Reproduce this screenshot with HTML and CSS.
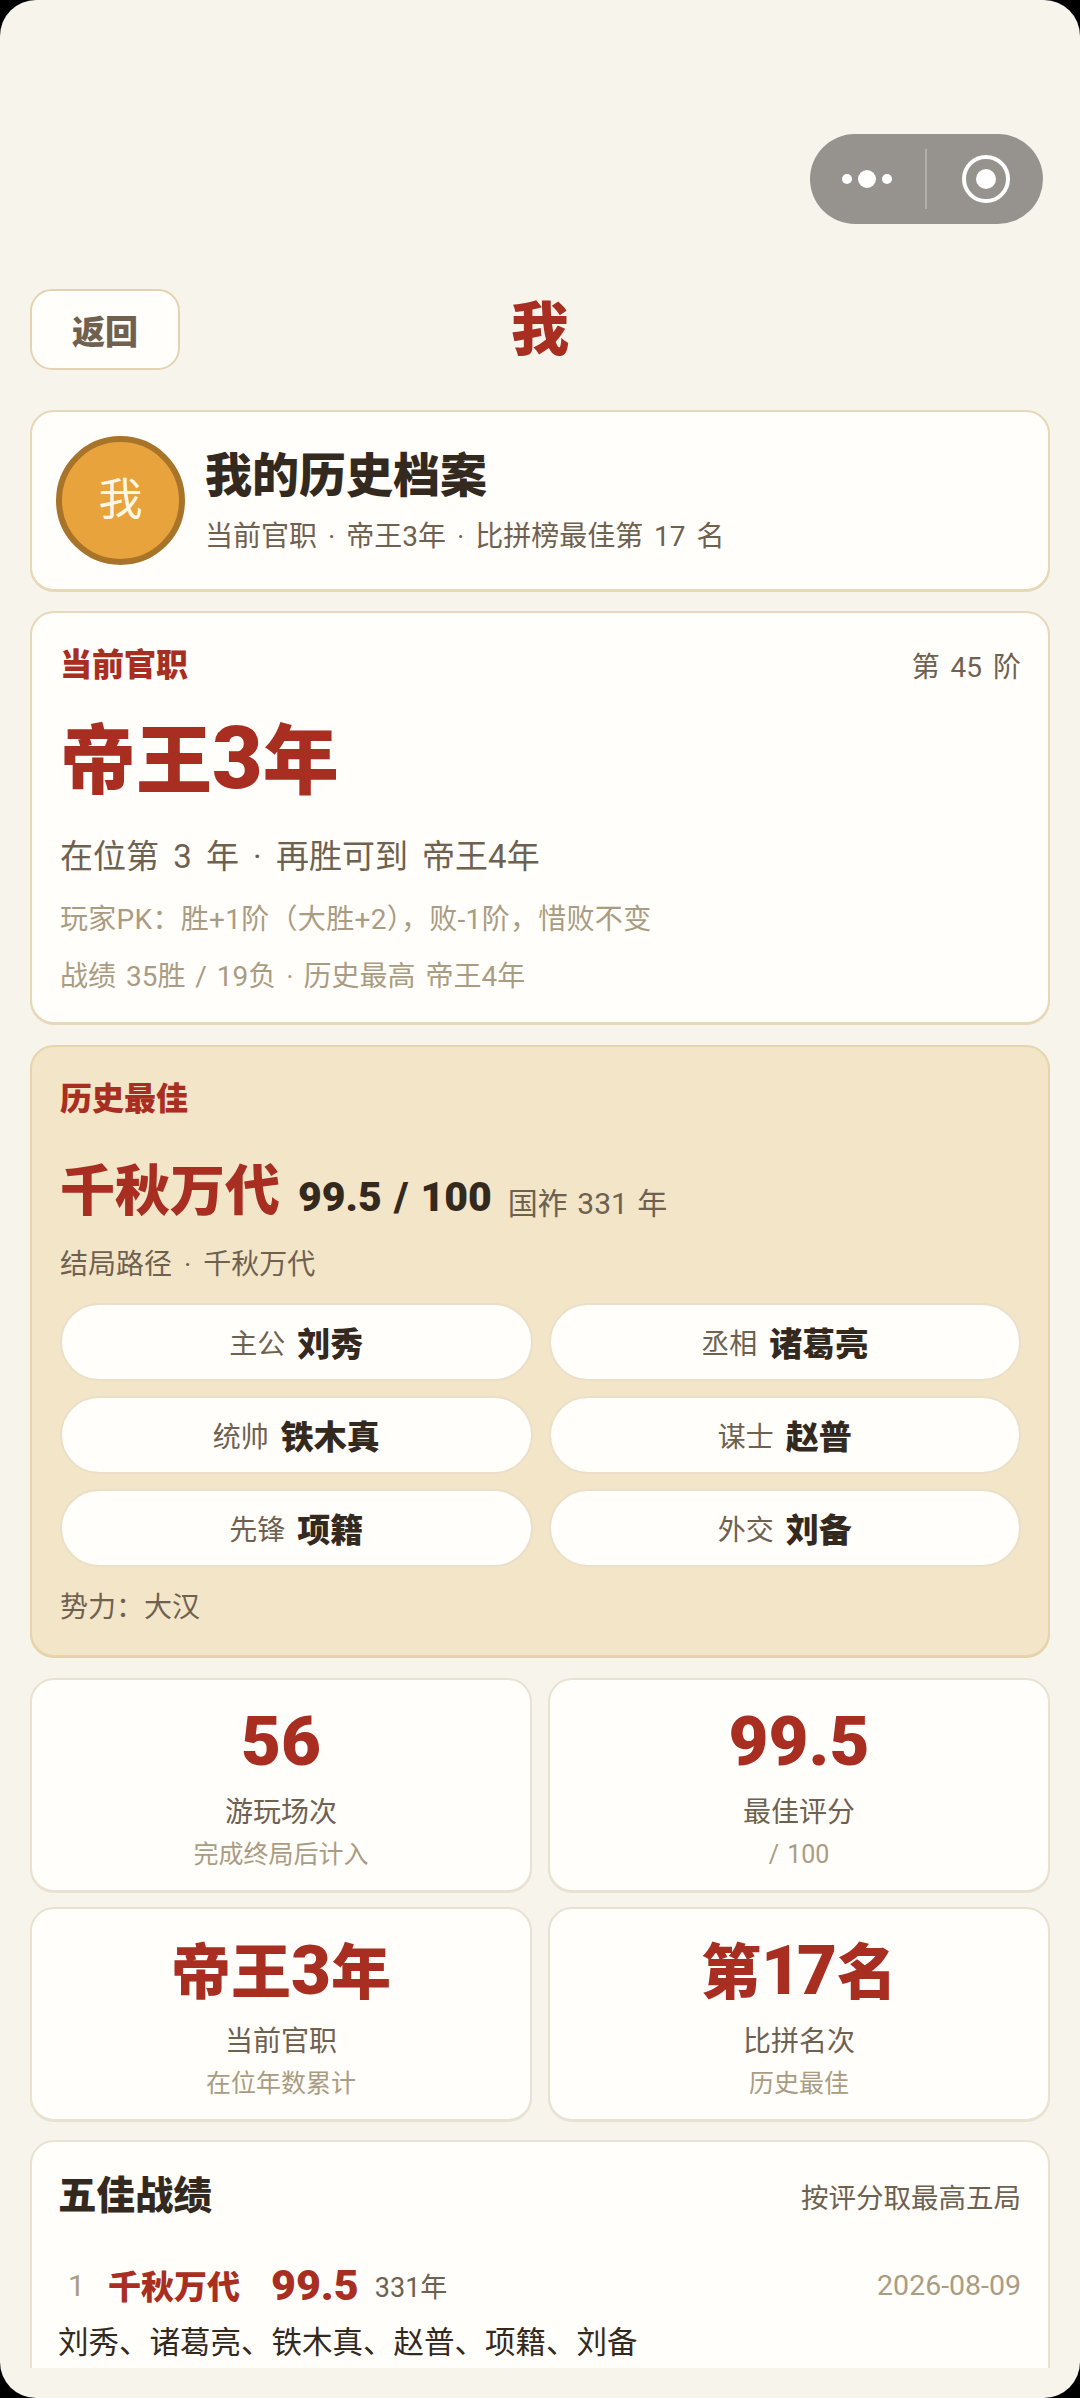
FILE: index.html
```html
<!DOCTYPE html>
<html lang="zh-CN">

<head>
    <meta charset="UTF-8">
    <meta name="viewport" content="width=device-width, initial-scale=1.0">
    <title>我</title>
    <link rel="stylesheet" href="styles.css">
</head>

<body>
    <div class="screen">
        <div class="capsule">
            <svg class="capsule-more" width="50" height="18" viewBox="0 0 50 18">
                <circle cx="5" cy="9" r="5" fill="#fff" />
                <circle cx="25" cy="9" r="9" fill="#fff" />
                <circle cx="45" cy="9" r="5" fill="#fff" />
            </svg>
            <span class="capsule-line"></span>
            <svg class="capsule-close" width="50" height="50" viewBox="0 0 50 50">
                <circle cx="25" cy="25" r="22" fill="none" stroke="#fff" stroke-width="4" />
                <circle cx="25" cy="25" r="10" fill="#fff" />
            </svg>
        </div>

        <div class="content">
            <div class="nav">
                <button class="btn-back">返回</button>
                <div class="nav-title">我</div>
            </div>

            <div class="card profile">
                <div class="avatar">我</div>
                <div>
                    <div class="profile-name">我的历史档案</div>
                    <div class="profile-sub">当前官职 · 帝王3年 · 比拼榜最佳第 17 名</div>
                </div>
            </div>

            <div class="card rank">
                <div class="row-between">
                    <span class="label">当前官职</span>
                    <span class="rank-level">第 45 阶</span>
                </div>
                <div class="rank-title">帝王<span class="digit">3</span>年</div>
                <div class="rank-line">在位第 3 年 · 再胜可到 帝王4年</div>
                <div class="hint rank-hint">玩家PK：胜+1阶（大胜+2），败-1阶，惜败不变</div>
                <div class="hint rank-hint2">战绩 35胜 / 19负 · 历史最高 帝王4年</div>
            </div>

            <div class="card best">
                <div class="label">历史最佳</div>
                <div class="best-head">
                    <span class="best-name">千秋万代</span>
                    <span class="best-score">99.5 / 100</span>
                    <span class="best-years">国祚 331 年</span>
                </div>
                <div class="best-path">结局路径 · 千秋万代</div>
                <div class="team">
                    <div class="pill"><span>主公</span><b>刘秀</b></div>
                    <div class="pill"><span>丞相</span><b>诸葛亮</b></div>
                    <div class="pill"><span>统帅</span><b>铁木真</b></div>
                    <div class="pill"><span>谋士</span><b>赵普</b></div>
                    <div class="pill"><span>先锋</span><b>项籍</b></div>
                    <div class="pill"><span>外交</span><b>刘备</b></div>
                </div>
                <div class="best-path best-force">势力：大汉</div>
            </div>

            <div class="stats">
                <div class="card stat">
                    <div class="stat-num"><span class="digit">56</span></div>
                    <div class="stat-label">游玩场次</div>
                    <div class="stat-sub">完成终局后计入</div>
                </div>
                <div class="card stat">
                    <div class="stat-num"><span class="digit">99.5</span></div>
                    <div class="stat-label">最佳评分</div>
                    <div class="stat-sub">/ 100</div>
                </div>
                <div class="card stat">
                    <div class="stat-num">帝王<span class="digit">3</span>年</div>
                    <div class="stat-label">当前官职</div>
                    <div class="stat-sub">在位年数累计</div>
                </div>
                <div class="card stat">
                    <div class="stat-num">第<span class="digit digit-tight">17</span>名</div>
                    <div class="stat-label">比拼名次</div>
                    <div class="stat-sub">历史最佳</div>
                </div>
            </div>

            <div class="card top5">
                <div class="row-between">
                    <span class="top5-title">五佳战绩</span>
                    <span class="top5-note">按评分取最高五局</span>
                </div>
                <div class="record">
                    <span class="record-no">1</span>
                    <span class="record-name">千秋万代</span>
                    <span class="record-score">99.5</span>
                    <span class="record-years">331年</span>
                    <span class="record-date">2026-08-09</span>
                </div>
                <div class="record-team">刘秀、诸葛亮、铁木真、赵普、项籍、刘备</div>
            </div>
        </div>
    </div>
</body>

</html>
```

FILE: styles.css
```css
:root {
    --bg: #f7f4ec;
    --card: #fffefa;
    --line: #e6d8b8;
    --line-soft: #e9e2d2;
    --red: #a82e22;
    --ink: #33291e;
    --sub: #6e6150;
    --hint: #aa9c82;
}

* {
    margin: 0;
    padding: 0;
    box-sizing: border-box;
}

html,
body {
    width: 1080px;
    height: 2398px;
    overflow: hidden;
    background: #000;
}

body {
    font-family: "Roboto", "Noto Sans CJK SC", sans-serif;
    color: var(--ink);
    word-spacing: 2px;
}

.screen {
    position: relative;
    width: 1080px;
    height: 2398px;
    padding-top: 289px;
    background: var(--bg);
    border-radius: 36px;
    overflow: hidden;
}

.capsule {
    position: absolute;
    top: 134px;
    left: 810px;
    width: 233px;
    height: 90px;
    display: flex;
    align-items: center;
    background: #96938e;
    border-radius: 45px;
}

.capsule-more {
    margin-left: 32px;
}

.capsule-line {
    width: 2px;
    height: 60px;
    margin-left: 33px;
    background: #b3b0aa;
}

.capsule-close {
    margin-left: 34px;
}

.content {
    height: 2079px;
    padding: 0 30px;
    overflow: hidden;
}

.nav {
    position: relative;
    height: 81px;
    margin-bottom: 40px;
}

.btn-back {
    display: block;
    width: 150px;
    height: 81px;
    font-family: inherit;
    font-size: 33px;
    font-weight: 900;
    color: var(--sub);
    background: var(--card);
    border: 2px solid #e4d3b2;
    border-radius: 22px;
}

.nav-title {
    position: absolute;
    top: 1px;
    left: 0;
    width: 1020px;
    line-height: 81px;
    text-align: center;
    font-size: 58px;
    font-weight: 900;
    color: var(--red);
}

.card {
    background: var(--card);
    border: 2px solid var(--line);
    border-radius: 24px;
    box-shadow: 0 1px 0 var(--line);
}

.row-between {
    display: flex;
    justify-content: space-between;
    align-items: center;
}

.profile {
    height: 181px;
    margin-bottom: 20px;
    padding-left: 24px;
    display: flex;
    align-items: center;
    gap: 20px;
}

.avatar {
    width: 129px;
    height: 129px;
    line-height: 117px;
    text-align: center;
    font-size: 44px;
    color: #fff8e6;
    background: #e8a33d;
    border: 6px solid #a8742a;
    border-radius: 50%;
}

.profile-name {
    font-size: 47px;
    font-weight: 900;
    line-height: 60px;
}

.profile-sub {
    margin-top: 13px;
    font-size: 28px;
    line-height: 36px;
    color: var(--sub);
    word-spacing: 4px;
}

.rank {
    height: 413px;
    margin-bottom: 21px;
    padding: 32px 27px 0 28px;
}

.label {
    font-size: 32px;
    font-weight: 900;
    line-height: 40px;
    color: var(--red);
}

.rank-level {
    font-size: 28px;
    color: var(--sub);
    word-spacing: 4px;
}

.digit {
    font-size: 1.15em;
    line-height: 1;
}

.digit-tight {
    letter-spacing: -4px;
    margin-right: 4px;
}

.rank-title {
    margin-top: 28px;
    font-size: 76px;
    font-weight: 900;
    line-height: 98px;
    color: var(--red);
}

.rank-line {
    margin-top: 24px;
    font-size: 33px;
    line-height: 44px;
    color: var(--sub);
    word-spacing: 6px;
}

.hint {
    font-size: 28px;
    line-height: 38px;
    color: var(--hint);
}

.rank-hint {
    margin-top: 22px;
    letter-spacing: 0.3px;
}

.rank-hint2 {
    margin-top: 19px;
    word-spacing: 3px;
}

.best {
    height: 612px;
    margin-bottom: 21px;
    padding: 32px 27px 0 28px;
    background: #f3e5c8;
    border-color: #e6d4ad;
    box-shadow: 0 1px 0 #e4cfa3;
}

.best-head {
    margin-top: 28px;
    display: flex;
    align-items: center;
    height: 78px;
}

.best-name {
    font-size: 55px;
    font-weight: 900;
    color: var(--red);
}

.best-score {
    margin: 22px 0 0 18px;
    font-size: 41px;
    font-weight: 900;
}

.best-years {
    margin: 30px 0 0 16px;
    font-size: 30px;
    color: var(--sub);
}

.best-path {
    margin-top: 21px;
    font-size: 28px;
    line-height: 38px;
    color: var(--sub);
    word-spacing: 5px;
}

.team {
    margin-top: 19px;
    display: grid;
    grid-template-columns: 1fr 1fr;
    gap: 15px 16px;
}

.pill {
    height: 78px;
    display: flex;
    align-items: center;
    justify-content: center;
    gap: 12px;
    background: var(--card);
    border: 2px solid #eadfc8;
    border-radius: 39px;
}

.pill span {
    font-size: 28px;
    color: var(--sub);
}

.pill b {
    font-size: 33px;
    font-weight: 900;
}

.best-force {
    margin-top: 22px;
}

.stats {
    display: grid;
    grid-template-columns: 1fr 1fr;
    gap: 15px 16px;
    margin-bottom: 19px;
}

.stat {
    height: 214px;
    padding-top: 23px;
    text-align: center;
    border-color: var(--line-soft);
    box-shadow: 0 1px 0 var(--line-soft);
}

.stat-num {
    font-size: 60px;
    font-weight: 900;
    line-height: 84px;
    color: var(--red);
}

.stat-label {
    margin-top: 6px;
    font-size: 28px;
    line-height: 40px;
    color: var(--sub);
}

.stat-sub {
    margin-top: 4px;
    font-size: 25px;
    line-height: 36px;
    color: var(--hint);
}

.top5 {
    height: 300px;
    padding: 29px 27px 0 26px;
    border-color: var(--line-soft);
}

.top5-title {
    font-size: 38.5px;
    font-weight: 900;
    line-height: 50px;
}

.top5-note {
    font-size: 27.5px;
    color: var(--sub);
}

.record {
    margin-top: 36px;
    padding-left: 10px;
    display: flex;
    align-items: center;
    height: 56px;
}

.record-no {
    width: 40px;
    font-size: 30px;
    color: var(--hint);
}

.record-name {
    font-size: 33px;
    font-weight: 900;
    color: var(--red);
}

.record-score {
    margin-left: 31px;
    font-size: 43px;
    font-weight: 900;
    color: var(--red);
}

.record-years {
    margin-left: 16px;
    font-size: 27px;
    color: var(--sub);
}

.record-date {
    margin-left: auto;
    font-size: 28.5px;
    color: var(--hint);
}

.record-team {
    margin-top: 8px;
    font-size: 30.5px;
    line-height: 44px;
}
```
